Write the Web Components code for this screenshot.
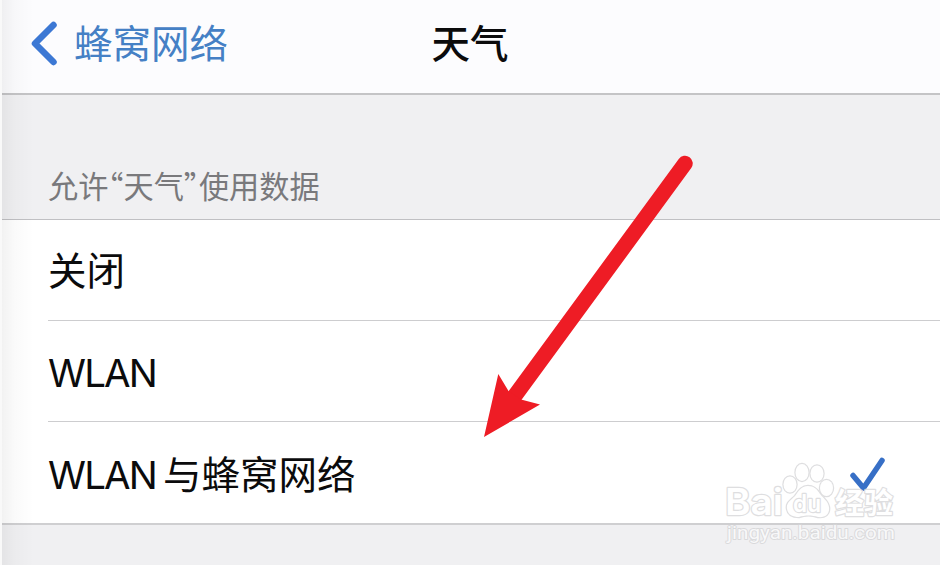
<!DOCTYPE html>
<html lang="zh-CN">
<head>
<meta charset="utf-8">
<title>天气</title>
<style>
  html, body { margin: 0; height: 565px; overflow: hidden; background: #fff; }
  body { font-family: Inter, "Noto Sans CJK SC", sans-serif; color: #0b0b0c; }
  .latin { letter-spacing: -1.8px; margin-right: 7px; }
</style>
</head>
<body>

<settings-screen>
  <nav-bar slot="nav" back="蜂窝网络">天气</nav-bar>
  <option-group>
    <span slot="caption">允许“天气”使用数据</span>
    <option-row>关闭</option-row>
    <option-row><span class="latin">WLAN</span></option-row>
    <option-row checked><span class="latin">WLAN</span>与蜂窝网络</option-row>
  </option-group>
  <pointer-arrow slot="overlay"></pointer-arrow>
  <site-watermark slot="overlay"></site-watermark>
</settings-screen>

<script>
function define(name, html, setup) {
  const template = document.createElement('template');
  template.innerHTML = html;

  customElements.define(name, class extends HTMLElement {
    connectedCallback() {
      if (this.shadowRoot) return;
      this.attachShadow({mode: 'open'});
      this.shadowRoot.append(template.content.cloneNode(true));
      if (setup) setup(this, this.shadowRoot);
    }
  });
}

define('settings-screen', `
  <style>
    :host {
      display: block;
      position: relative;
      box-sizing: border-box;
      width: 940px;
      height: 565px;
      padding-left: 2px;
      background: #f9f9f9;
      overflow: hidden;
    }
    main { height: 565px; background: #f0f0f2; }
    /* soft shade along the left edge */
    .shade {
      position: absolute;
      inset: 0 auto 0 2px;
      width: 32px;
      background: linear-gradient(90deg, rgba(0,0,0,.05), rgba(0,0,0,.018) 40%, transparent);
    }
  </style>
  <main>
    <slot name="nav"></slot>
    <slot></slot>
  </main>
  <div class="shade"></div>
  <slot name="overlay"></slot>
`);

define('nav-bar', `
  <style>
    :host {
      display: grid;
      grid-template-columns: 1fr auto 1fr;
      align-items: center;
      box-sizing: border-box;
      height: 95px;
      padding: 0 0 5px 28px;
      border-bottom: 2px solid #c4c4c6;
      background: #fcfcfe;
      font-size: 38.5px;
      line-height: 56px;
    }
    .back { display: flex; align-items: center; gap: 15px; color: #4580c5; }
    .back svg { display: block; }
    .title { font-weight: 500; margin-left: -30px; }
  </style>
  <div class="back">
    <svg width="29" height="46" viewBox="0 0 29 46" fill="none" stroke="#3c78d4" stroke-width="6.500" stroke-linecap="round" stroke-linejoin="round">
      <path d="M23.500 4 5 22.500 23.500 41"/>
    </svg>
    <span></span>
  </div>
  <div class="title"><slot></slot></div>
`, (host, root) => {
  root.querySelector('.back span').textContent = host.getAttribute('back');
});

define('option-group', `
  <style>
    :host { display: block; }
    /* halt sets the curly quotes at half width */
    .caption {
      display: flex;
      align-items: flex-end;
      box-sizing: border-box;
      height: 124px;
      padding: 0 0 12px 46px;
      color: #79797c;
      font: 30.2px/44px "Noto Sans CJK SC", sans-serif;
      font-feature-settings: "halt";
    }
    .rows {
      border-top: 1px solid #c0c0c3;
      border-bottom: 2px solid #cfcfd1;
      background: #fff;
    }
  </style>
  <div class="caption"><slot name="caption"></slot></div>
  <div class="rows"><slot></slot></div>
`);

define('option-row', `
  <style>
    :host {
      display: flex;
      justify-content: space-between;
      align-items: center;
      box-sizing: border-box;
      height: 101px;
      margin-left: 46px;
      padding: 3px 54px 0 0;
      border-bottom: 1px solid #cdcdcf;
      font-size: 38.5px;
      line-height: 56px;
    }
    :host(:first-of-type) { padding-top: 1px; }
    :host(:last-of-type) { padding-top: 4px; border-bottom: 0; }
    svg { display: none; }
    :host([checked]) svg { display: block; }
  </style>
  <div><slot></slot></div>
  <svg width="38" height="38" viewBox="0 0 38 38" fill="none" stroke="#376fc6" stroke-width="5.500" stroke-linecap="round" stroke-linejoin="round">
    <path d="M5 19.500 15.500 32 34 4.500"/>
  </svg>
`);

define('pointer-arrow', `
  <style>
    :host { position: absolute; left: 480px; top: 150px; }
    svg { display: block; }
  </style>
  <svg width="220" height="292" viewBox="480 150 220 292">
    <path d="M685 163.500 514 397" stroke="#ee1c25" stroke-width="15.500" stroke-linecap="round"/>
    <path d="M484 437 498.300 374 508.500 391 521 399.500 540 404.500Z" fill="#ee1c25"/>
  </svg>
`);

define('site-watermark', `
  <style>
    :host { position: absolute; left: 720px; top: 458px; }
    svg { display: block; }
    g { fill: #fff; stroke: #d9d9db; stroke-width: 2.400; paint-order: stroke; stroke-linejoin: round; }
    text { font-family: Inter, "Noto Sans CJK SC", sans-serif; }
    .url { font-family: Roboto, sans-serif; fill: #fafafb; stroke: #d6d6d8; stroke-width: 1.800; }
  </style>
  <svg width="184" height="92" viewBox="720 458 184 92">
    <g opacity=".85">
      <text x="725" y="515" font-size="37" font-weight="600" textLength="58" lengthAdjust="spacingAndGlyphs">Bai</text>
      <ellipse cx="790" cy="484.500" rx="6.500" ry="8"/>
      <ellipse cx="802" cy="472.500" rx="6.500" ry="8.500"/>
      <ellipse cx="817" cy="473.500" rx="6.500" ry="8"/>
      <ellipse cx="826.500" cy="488" rx="6.500" ry="8"/>
      <path d="M808 486C801 486 798 492 795 496 790 501 786 503 787 509 788 515 793 517 799 517 805 515 812 515 818 517 825 518 830 514 829 507 828 501 824 499 820 494 817 489 814 486 808 486Z"/>
      <text x="793" y="512" font-size="24" font-weight="600" textLength="28" lengthAdjust="spacingAndGlyphs">du</text>
      <text x="835" y="514" font-size="29" font-weight="700" textLength="58" lengthAdjust="spacingAndGlyphs">经验</text>
      <text class="url" x="727" y="539" font-size="19" textLength="168" lengthAdjust="spacingAndGlyphs">jingyan.baidu.com</text>
    </g>
  </svg>
`);
</script>
</body>
</html>
